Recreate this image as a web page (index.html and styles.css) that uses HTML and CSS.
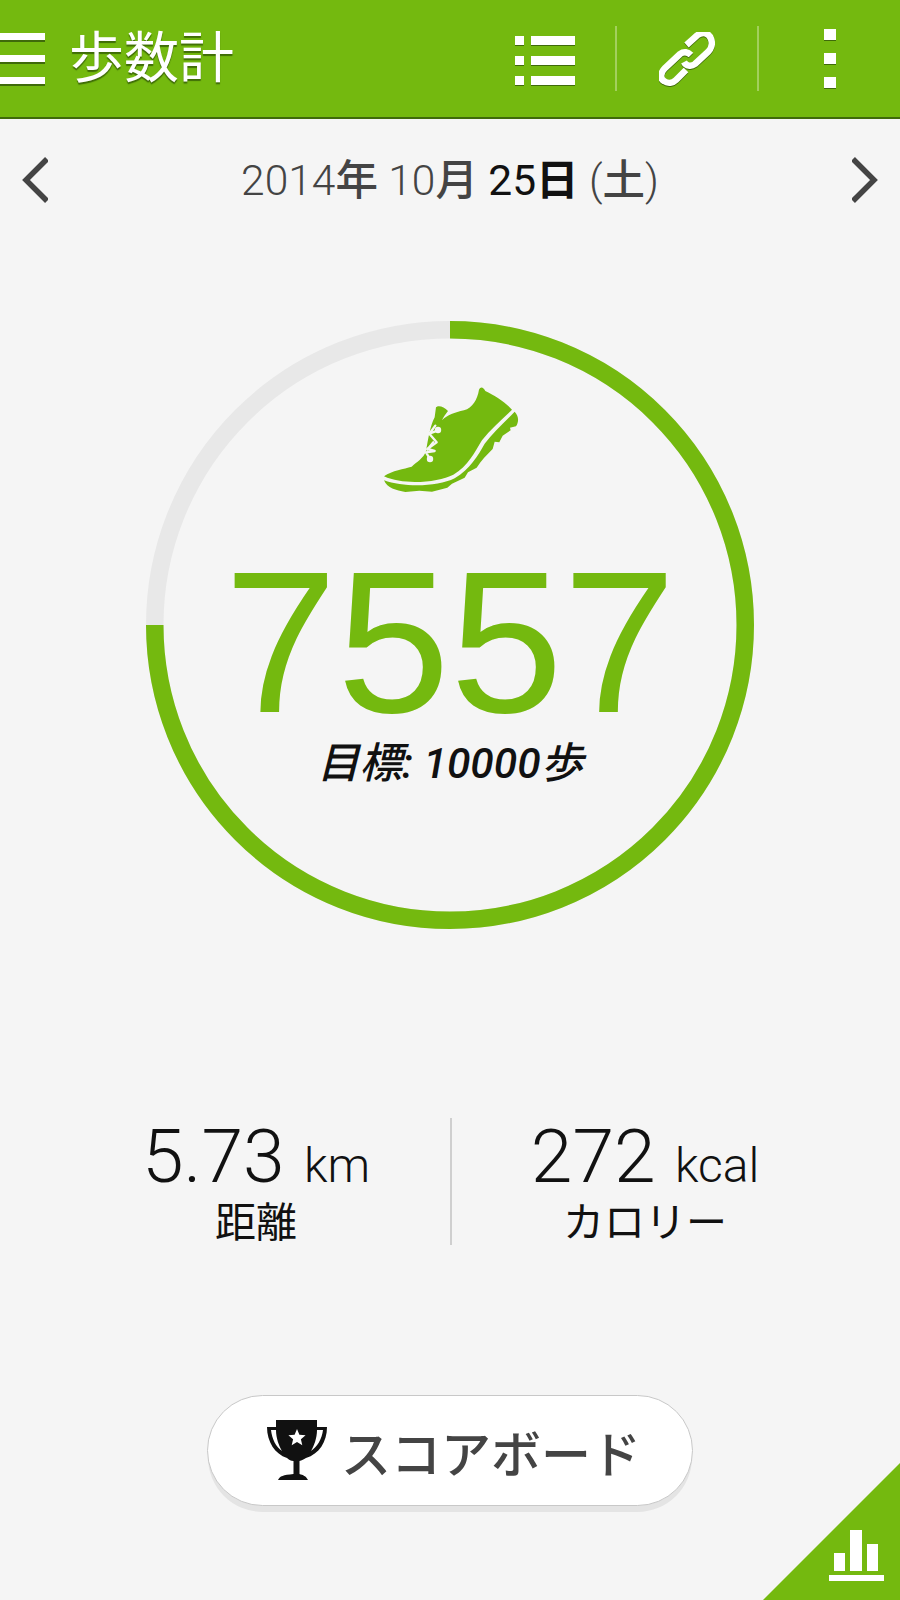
FILE: index.html
```html
<!DOCTYPE html>
<html lang="ja">
<head>
    <meta charset="UTF-8">
    <meta name="viewport" content="width=device-width, initial-scale=1.0">
    <title>歩数計</title>
    <link rel="stylesheet" href="styles.css">
</head>
<body>
    <header class="topbar">
        <div class="menu-btn"><span></span><span></span><span></span></div>
        <h1 class="title">歩数計</h1>
        <div class="actions">
            <svg class="icon-list" width="60" height="52" viewBox="0 0 60 52">
                <rect x="0" y="0" width="9" height="9"/><rect x="16" y="0" width="44" height="9"/>
                <rect x="0" y="20" width="9" height="9"/><rect x="16" y="20" width="44" height="9"/>
                <rect x="0" y="40" width="9" height="9"/><rect x="16" y="40" width="44" height="9"/>
            </svg>
            <i class="sep"></i>
            <svg class="icon-link" width="56" height="58" viewBox="10 12 56 58">
                <path d="M37.500 25 L48 15.500 C54 11 60 13 62 19 C64 24 62 29 59 32 L46 44 C42 47 37 46 35 42"/>
                <path d="M42 35 C39 32 35 31 31 34 L16 48 C11 53 11 59 15 61 C19 64 24 63 27 60 L37 50"/>
            </svg>
            <i class="sep"></i>
            <div class="overflow"><span></span><span></span><span></span></div>
        </div>
    </header>

    <div class="date-row">
        <svg class="chevron" width="26" height="46" viewBox="0 0 26 46"><path d="M25 2 L4 23 L25 44"/></svg>
        <p class="date">2014<span class="kanji">年</span> 10<span class="kanji">月</span> <b>25<strong>日</strong></b> (<span class="kanji">土</span>)</p>
        <svg class="chevron" width="26" height="46" viewBox="0 0 26 46"><path d="M1 2 L22 23 L1 44"/></svg>
    </div>

    <section class="ring">
        <!-- the arc starts at 12 o'clock, the grey rest is the last quarter -->
        <svg class="ring-svg" width="608" height="608" viewBox="0 0 608 608" fill="none" stroke-width="17.500">
            <circle cx="304" cy="304" r="295.250" stroke="#e8e8e8"/>
            <circle cx="304" cy="304" r="295.250" stroke="#74b90f" pathLength="100" stroke-dasharray="75 100" transform="rotate(-90 304 304)"/>
        </svg>
        <svg class="shoe" width="136" height="114" viewBox="20 0 136 114">
            <g transform="scale(0.3333)" fill="#74b90f">
                <path d="M60 280 C85 262 120 258 143 251 C160 236 178 226 186 205 C192 172 198 130 212 103 L216 73 C222 66 240 70 252 84 C244 94 238 102 234 112 C250 96 272 88 300 82 C326 74 340 50 345 20 C350 10 358 12 364 24 C390 36 422 56 444 80 C412 112 380 138 354 172 C332 208 312 250 268 275 C222 298 120 308 60 280 Z"/>
                <path d="M60 292 C120 314 220 312 272 286 C318 258 342 218 362 182 C386 150 418 122 452 86 C466 100 464 120 456 130 L438 134 L440 142 L416 158 L406 178 L392 176 L386 198 C368 216 352 232 338 254 L312 268 L302 284 L264 302 L250 314 L204 326 L166 323 L124 327 C96 322 70 316 60 292 Z"/>
            </g>
            <g transform="scale(0.3333)" fill="none" stroke="#f5f5f5" stroke-width="7" stroke-linecap="round" stroke-linejoin="round">
                <path d="M222 142 L196 152 L218 178 L190 198 L212 204 L186 208 L198 228"/>
                <path d="M198 150 L214 128 M190 200 L208 178"/>
            </g>
            <circle cx="74" cy="47" r="3.200" fill="#f5f5f5"/>
            <circle cx="66" cy="76" r="3.200" fill="#f5f5f5"/>
        </svg>
        <div class="steps">7557</div>
        <div class="goal">目標: 10000歩</div>
    </section>

    <section class="stats">
        <div class="stat">
            <div class="stat-value">5.73 <small>km</small></div>
            <div class="stat-label">距離</div>
        </div>
        <div class="stat">
            <div class="stat-value">272 <small>kcal</small></div>
            <div class="stat-label">カロリー</div>
        </div>
    </section>

    <button class="score-btn">
        <svg width="60" height="62" viewBox="0 0 60 62">
            <path d="M9 0 H50 V7 H60 C60 22 52 34 39 38 C36 40 33 41 32.500 41 V54 C36 55 39 56 41 60 H11 C13 56 16 55 26.500 54 V41 C24 41 22 40 20 38 C8 34 0 22 0 7 H9 Z" fill="#111"/>
            <path d="M4 10 H9 C9 18 12 26 15 31 C9 27 5 19 4 10 Z M56 10 H50 C50 18 47 26 44 31 C50 27 55 19 56 10 Z" fill="#fff"/>
            <path d="M30 9 L32.400 14.700 L38.600 15.200 L33.900 19.200 L35.300 25.300 L30 22.100 L24.700 25.300 L26.100 19.200 L21.400 15.200 L27.600 14.700 Z" fill="#fff"/>
        </svg>
        <span>スコアボード</span>
    </button>

    <div class="corner">
        <svg width="56" height="52" viewBox="0 0 56 52" fill="#fff">
            <rect x="5" y="23" width="11" height="18"/>
            <rect x="21" y="0" width="12" height="41"/>
            <rect x="38" y="14" width="11" height="27"/>
            <rect x="0" y="45" width="55" height="6"/>
        </svg>
    </div>
</body>
</html>
```

FILE: styles.css
```css
*{
    margin: 0;
    padding: 0;
    box-sizing: border-box;
}

body{
    position: relative;
    width: 900px;
    height: 1600px;
    overflow: hidden;
    background-color: #f5f5f5;
    font-family: Roboto, "Noto Sans CJK JP", sans-serif;
}

.topbar{
    display: flex;
    align-items: center;
    height: 119px;
    background-color: #74b90f;
    border-bottom: 2px solid #3f6a0a;
}
.menu-btn{
    display: flex;
    flex-direction: column;
    gap: 15px;
    width: 45px;
    margin-top: -1px;
}
.menu-btn span{
    height: 7px;
    background-color: #fff;
    box-shadow: 0 2px 0 #3f6a0a;
}
.title{
    margin-left: 24px;
    font-size: 55px;
    font-weight: 400;
    line-height: 1;
    color: #fff;
    text-shadow: 0 2px 1px rgba(50, 90, 5, .8);
}
.actions{
    display: flex;
    align-items: center;
    margin-left: auto;
    height: 100%;
}
.icon-list{
    margin-right: 40px;
    margin-top: 7px;
    fill: #fff;
    filter: drop-shadow(0 1px 0 #3f6a0a);
}
.icon-link{
    margin: 5px 42px 0 42px;
    fill: none;
    stroke: #fff;
    stroke-width: 6.500;
    filter: drop-shadow(0 1px 0 #3f6a0a);
}
.sep{
    width: 2px;
    height: 65px;
    background-color: #a3d05c;
    margin-top: -1px;
}
.overflow{
    display: flex;
    flex-direction: column;
    gap: 13px;
    width: 12px;
    margin: -1px 64px 0 65px;
}
.overflow span{
    height: 11px;
    background-color: #fff;
    box-shadow: 0 1px 0 #3f6a0a;
}

.date-row{
    display: flex;
    align-items: center;
    justify-content: space-between;
    height: 122px;
    padding: 0 22px;
}
.chevron{
    fill: none;
    stroke: #444;
    stroke-width: 5.500;
}
.date{
    margin-top: -7px;
    font-size: 42.500px;
    font-weight: 300;
    color: #444;
}
.kanji{
    font-weight: 500;
}
.date b{
    font-weight: 400;
    color: #111;
}
.date strong{
    font-weight: 700;
}

.ring{
    position: relative;
    display: flex;
    flex-direction: column;
    align-items: center;
    width: 608px;
    height: 608px;
    margin: 80px auto 0;
}
.ring-svg{
    position: absolute;
    top: 0;
    left: 0;
}
.shoe{
    margin-top: 62px;
    margin-left: 4px;
}
.steps{
    margin-top: 45px;
    font-family: "Liberation Sans", sans-serif;
    font-size: 203px;
    line-height: 200px;
    color: #74b90f;
}
.goal{
    font-size: 42.500px;
    font-weight: 500;
    font-style: italic;
    line-height: 44px;
    color: #111;
}

.stats{
    display: grid;
    grid-template-columns: 1fr 1fr;
    margin: 189px 62px 0;
    height: 127px;
}
.stat{
    display: flex;
    flex-direction: column;
    align-items: center;
}
.stat:last-child{
    border-left: 2px solid #cfcfcf;
}
.stat-value{
    height: 84px;
    font-size: 75px;
    font-weight: 300;
    line-height: 76px;
    color: #111;
}
.stat-value small{
    margin-left: 1px;
    font-size: 48px;
}
.stat-label{
    font-size: 41px;
    line-height: 43px;
    color: #111;
}

.score-btn{
    display: flex;
    align-items: center;
    justify-content: center;
    gap: 14px;
    width: 486px;
    height: 111px;
    margin: 150px auto 0;
    padding-left: 8px;
    background-color: #fff;
    border: 1px solid #c8c8c8;
    border-radius: 56px;
    box-shadow: 0 7px 0 -1px #e4e4e4;
    font-family: inherit;
    font-size: 50px;
    font-weight: 500;
    color: #444;
}

.corner{
    position: absolute;
    right: 0;
    bottom: 0;
    display: flex;
    align-items: flex-end;
    justify-content: flex-end;
    width: 137px;
    height: 137px;
    padding: 0 15px 18px 0;
    background-color: #74b90f;
    clip-path: polygon(100% 0, 100% 100%, 0 100%);
}
```
